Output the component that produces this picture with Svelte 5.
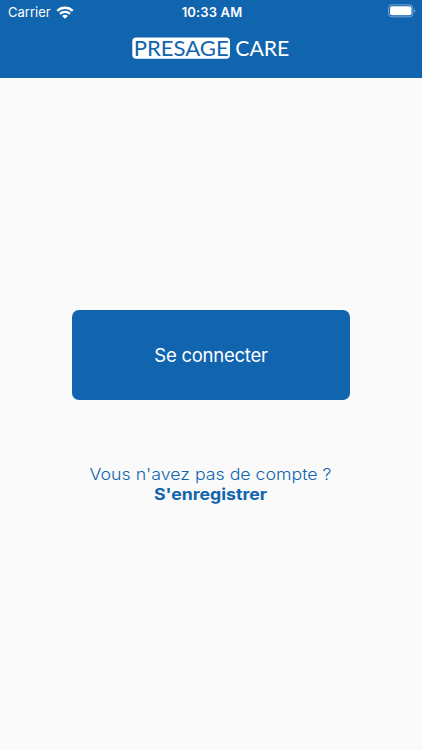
<script>
  const carrier = 'Carrier';
  const time = '10:33 AM';
</script>

<div class="screen">
  <header>
    <div class="status">
      <div class="left">
        <span class="carrier">{carrier}</span>
        <svg class="wifi" width="18" height="13" viewBox="0 0 18 13" aria-hidden="true">
          <g fill="none" stroke="#fff" stroke-width="2.3">
            <path d="M1.3 4.9C5.5 .7 12.5 .7 16.7 4.9" />
            <path d="M4 7.9C6.8 5.2 11.2 5.2 14 7.9" />
          </g>
          <path d="M6.1 9.9C7.7 8.5 10.3 8.5 11.9 9.9L9 12.8Z" fill="#fff" />
        </svg>
      </div>
      <span class="time">{time}</span>
      <svg class="battery" width="28" height="14" viewBox="0 0 28 14" aria-hidden="true">
        <rect x=".5" y=".8" width="24.5" height="12" rx="3.6" fill="none" stroke="#fff" stroke-opacity=".42" />
        <rect x="2" y="2.3" width="21.5" height="9" rx="2" fill="#fff" />
        <path d="M26.2 4.9Q28.6 6.8 26.2 8.7Z" fill="#fff" fill-opacity=".42" />
      </svg>
    </div>
    <svg class="logo" width="160" height="24" viewBox="0 0 160 24" role="img" aria-label="Presage Care">
      <rect x="1.3" y="1.6" width="97.7" height="21.2" rx="4" fill="#fff" />
      <text x="2.7" y="19.8" textLength="95" lengthAdjust="spacingAndGlyphs" fill="#1164ae">PRESAGE</text>
      <text x="104.3" y="19.8" textLength="54" lengthAdjust="spacingAndGlyphs" fill="#fff">CARE</text>
    </svg>
  </header>
  <main>
    <button>Se connecter</button>
    <svg class="signup" width="244" height="42" viewBox="0 0 244 42">
      <text class="question" x="0.5" y="17" textLength="242" lengthAdjust="spacingAndGlyphs">Vous n'avez pas de compte ?</text>
      <a href="#register">
        <text class="register" x="65" y="37" textLength="113" lengthAdjust="spacingAndGlyphs">S'enregistrer</text>
      </a>
    </svg>
  </main>
</div>

<style>
  .screen {
    width: 100%;
    height: 750px;
    display: flex;
    flex-direction: column;
    background: #fafafa;
    font-family: Inter, "Liberation Sans", sans-serif;
  }
  header {
    height: 78px;
    flex: none;
    display: flex;
    flex-direction: column;
    align-items: center;
    background: #1164ae;
    color: #fff;
  }
  .status {
    width: 100%;
    height: 24px;
    box-sizing: border-box;
    padding: 0 6px 0 8px;
    display: grid;
    grid-template-columns: 1fr auto 1fr;
    align-items: center;
    font-size: 13px;
    line-height: 24px;
  }
  .left {
    display: flex;
    align-items: center;
    gap: 5px;
  }
  .carrier {
    letter-spacing: 0;
  }
  .time {
    font-weight: 600;
    letter-spacing: 0.15px;
  }
  .battery {
    justify-self: end;
    margin-bottom: 2px;
  }
  .logo {
    margin-top: 12px;
    font-family: Lato, sans-serif;
    font-size: 21px;
  }
  main {
    flex: 1;
    display: flex;
    flex-direction: column;
    align-items: center;
    padding-top: 232px;
  }
  button {
    width: 278px;
    height: 90px;
    padding: 0;
    border: 0;
    border-radius: 7px;
    background: #1164ae;
    color: #fff;
    font: 400 18.5px Inter, sans-serif;
    letter-spacing: -0.25px;
  }
  .signup {
    margin-top: 63px;
    fill: #1164ae;
    font-size: 16.3px;
  }
  .question {
    font-weight: 300;
  }
  .register {
    font-weight: 700;
  }
</style>
